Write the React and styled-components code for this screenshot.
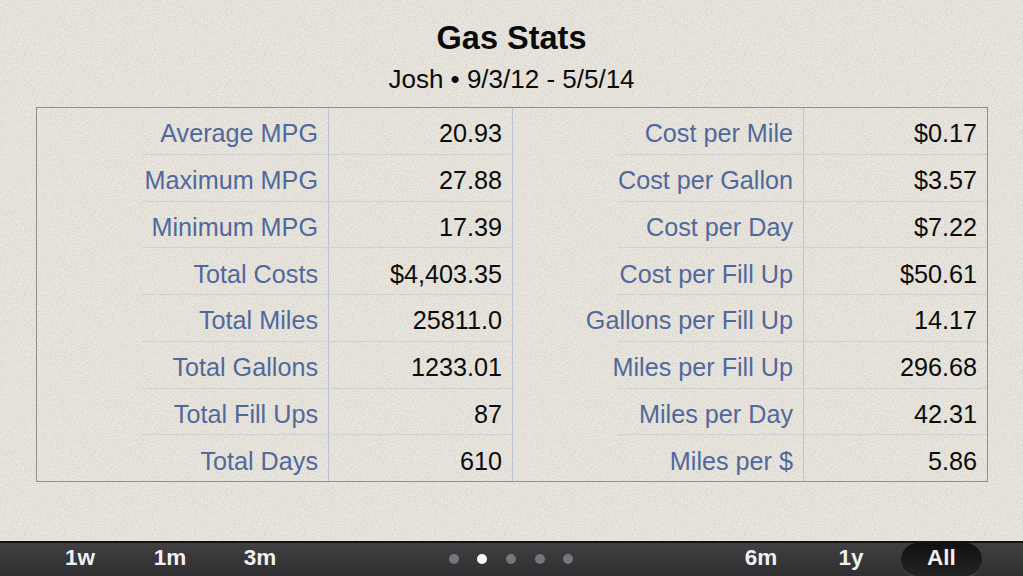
import styled, { createGlobalStyle } from "styled-components"

const grain = `url("data:image/svg+xml,%3Csvg xmlns='http://www.w3.org/2000/svg' width='240' height='240'%3E%3Cfilter id='n' x='0' y='0' width='100%25' height='100%25'%3E%3CfeTurbulence type='fractalNoise' baseFrequency='0.9' numOctaves='2' stitchTiles='stitch'/%3E%3CfeColorMatrix values='0 0 0 0 0.42 0 0 0 0 0.40 0 0 0 0 0.34 0.7 0 0 0 -0.24'/%3E%3C/filter%3E%3Crect width='240' height='240' filter='url(%23n)'/%3E%3C/svg%3E")`

const GlobalStyle = createGlobalStyle`
    html, body {
        margin: 0;
        padding: 0;
        overflow: hidden;
    }
    * {
        box-sizing: border-box;
    }
`

const leftRows = [
    ["Average MPG", "20.93"],
    ["Maximum MPG", "27.88"],
    ["Minimum MPG", "17.39"],
    ["Total Costs", "$4,403.35"],
    ["Total Miles", "25811.0"],
    ["Total Gallons", "1233.01"],
    ["Total Fill Ups", "87"],
    ["Total Days", "610"],
]

const rightRows = [
    ["Cost per Mile", "$0.17"],
    ["Cost per Gallon", "$3.57"],
    ["Cost per Day", "$7.22"],
    ["Cost per Fill Up", "$50.61"],
    ["Gallons per Fill Up", "14.17"],
    ["Miles per Fill Up", "296.68"],
    ["Miles per Day", "42.31"],
    ["Miles per $", "5.86"],
]

function StatsPanel({ rows, divided }) {
    return (
        <Panel divided={divided}>
            {rows.map(([label, value], i) => (
                <Row key={label} last={i === rows.length - 1} divided={divided}>
                    <Label>{label}</Label>
                    <Value>{value}</Value>
                </Row>
            ))}
        </Panel>
    )
}

export default function App() {
    return (
        <Page>
            <GlobalStyle />
            <Header>
                <Title>Gas Stats</Title>
                <Subtitle>Josh • 9/3/12 - 5/5/14</Subtitle>
            </Header>
            <Table>
                <StatsPanel rows={leftRows} divided />
                <StatsPanel rows={rightRows} />
            </Table>
            <Toolbar>
                <TabGroup>
                    <Tab>1w</Tab>
                    <Tab>1m</Tab>
                    <Tab>3m</Tab>
                </TabGroup>
                <Dots>
                    {[0, 1, 2, 3, 4].map(i => <Dot key={i} active={i === 1} />)}
                </Dots>
                <TabGroup end>
                    <Tab>6m</Tab>
                    <Tab>1y</Tab>
                    <Tab selected>All</Tab>
                </TabGroup>
            </Toolbar>
        </Page>
    )
}

const Page = styled.div`
width: 1023px;
height: 576px;
display: flex;
flex-direction: column;
background-color: #ebe8e1;
background-image: ${grain};
font-family: "Liberation Sans", Arial, sans-serif;
overflow: hidden;
`

const Header = styled.header`
height: 107px;
padding-top: 20px;
display: flex;
flex-direction: column;
align-items: center;
color: #0b0b0b;
`

const Title = styled.h1`
margin: 0;
font-size: 32.5px;
line-height: 37px;
font-weight: 700;
`

const Subtitle = styled.p`
margin: 7px 0 0;
font-size: 26px;
line-height: 30px;
`

const Table = styled.section`
width: 952px;
height: 375px;
margin-left: 36px;
display: grid;
grid-template-columns: 476px 474px;
border: 1px solid #8f8f8b;
`

const Panel = styled.div`
display: flex;
flex-direction: column;
padding-left: 105px;
border-right: ${props => props.divided ? "1px solid #bcc3d0" : "none"};
`

const Row = styled.div`
flex: 1;
display: grid;
grid-template-columns: ${props => props.divided ? "186px" : "185px"} 1fr;
border-bottom: ${props => props.last ? "none" : "1px solid #cdd0d4"};
`

const Label = styled.div`
display: flex;
justify-content: flex-end;
align-items: center;
padding: 6px 10px 0 0;
font-size: 25.2px;
color: #51689b;
white-space: nowrap;
`

const Value = styled.div`
display: flex;
justify-content: flex-end;
align-items: center;
padding: 6px 10px 0 0;
font-size: 25.2px;
color: #0b0b0b;
border-left: 1px solid #bcc3d0;
`

const Toolbar = styled.footer`
margin-top: auto;
height: 35px;
display: grid;
grid-template-columns: 1fr auto 1fr;
padding: 0 37px 0 35px;
background: linear-gradient(#403f41, #2f2e30);
border-top: 2px solid #111;
`

const TabGroup = styled.div`
display: flex;
justify-content: ${props => props.end ? "flex-end" : "flex-start"};
`

const Tab = styled.div`
width: 90px;
height: 33px;
padding-bottom: 3px;
display: flex;
justify-content: center;
align-items: center;
font-size: 22.5px;
font-weight: 700;
color: #f0f0f0;
${props => props.selected && `
    width: 81px;
    margin: 0 4px 0 5px;
    border-radius: 17px;
    background: linear-gradient(#111, #232323);
    box-shadow: 0 1px 0 rgba(255, 255, 255, 0.18);
`}
`

const Dots = styled.div`
display: flex;
align-items: center;
gap: 18.7px;
padding: 0 0 1px 1px;
`

const Dot = styled.span`
width: 10px;
height: 10px;
border-radius: 50%;
background-color: ${props => props.active ? "#ffffff" : "#77767a"};
`
